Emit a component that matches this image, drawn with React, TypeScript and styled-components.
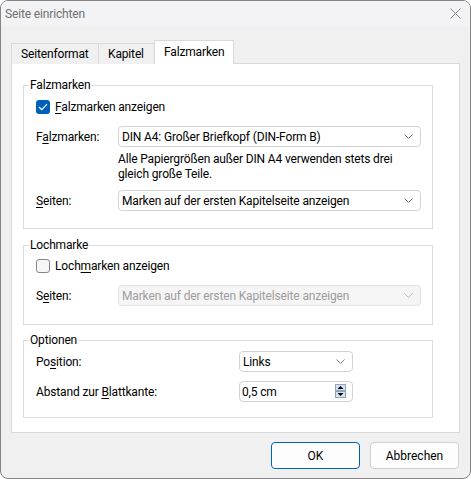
import React from 'react';
import styled, { createGlobalStyle, css } from 'styled-components';

const GlobalStyle = createGlobalStyle`
  html, body {
    margin: 0;
    padding: 0;
    background: #ffffff;
  }
  body {
    font-family: Roboto, 'Noto Sans', sans-serif;
    font-size: 12px;
    letter-spacing: -0.15px;
    color: #1a1a1a;
  }
  * {
    box-sizing: border-box;
  }
`;

const Window = styled.div`
  width: 471px;
  height: 479px;
  border: 1px solid #858585;
  border-radius: 8px;
  overflow: hidden;
  background: #f0f0f0;
  display: flex;
  flex-direction: column;
`;

const TitleBar = styled.div`
  height: 25px;
  flex: none;
  background: #f3f3f6;
  display: flex;
  align-items: center;
  justify-content: space-between;
  padding: 0 9px 0 4px;
  color: #707070;
`;

const Body = styled.div`
  flex: 1;
  display: flex;
  flex-direction: column;
  padding: 14px 10px 0 10px;
`;

const TabStrip = styled.div`
  display: flex;
  align-items: flex-end;
  height: 24px;
  margin-bottom: -1px;
  position: relative;
  z-index: 1;
`;

const Tab = styled.div<{ $active?: boolean; $width: number }>`
  width: ${({ $width }) => $width}px;
  height: 21px;
  border: 1px solid #d9d9d9;
  border-bottom: none;
  background: #f0f0f0;
  display: flex;
  align-items: center;
  padding-left: 9px;
  color: #000;
  & + & {
    margin-left: -1px;
  }
  ${({ $active }) =>
    $active &&
    css`
      height: 24px;
      background: #ffffff;
      padding-bottom: 2px;
    `}
`;

const Panel = styled.div`
  flex: 1;
  background: #ffffff;
  border: 1px solid #d9d9d9;
  padding: 13px 26px 0 11px;
`;

const Group = styled.fieldset<{ $pt: number; $pb: number; $mt?: number }>`
  margin: ${({ $mt }) => $mt ?? 0}px 0 0 0;
  min-width: 0;
  border: 1px solid #dcdcdc;
  padding: ${({ $pt }) => $pt}px 11px ${({ $pb }) => $pb}px 12px;
`;

const Legend = styled.legend`
  padding: 0 1px;
  margin-left: -7px;
  line-height: 16px;
  color: #000;
`;

const CheckRow = styled.label`
  display: flex;
  align-items: center;
  gap: 5px;
  height: 20px;
  color: #000;
`;

const Box = styled.span<{ $checked?: boolean }>`
  width: 14px;
  height: 14px;
  border-radius: 3px;
  display: flex;
  align-items: center;
  justify-content: center;
  ${({ $checked }) =>
    $checked
      ? css`
          background: #005fb8;
        `
      : css`
          background: #f6f6f6;
          border: 1px solid #878787;
        `}
`;

const FieldRow = styled.div<{ $mt: number; $labelWidth: number }>`
  display: grid;
  grid-template-columns: ${({ $labelWidth }) => $labelWidth}px 1fr;
  align-items: center;
  margin-top: ${({ $mt }) => $mt}px;
  color: #000;
`;

const Combo = styled.div<{ $disabled?: boolean; $width?: number }>`
  height: 21px;
  width: ${({ $width }) => ($width ? `${$width}px` : 'auto')};
  border: 1px solid #d3d3d3;
  border-radius: 4px;
  background: #ffffff;
  display: flex;
  align-items: center;
  justify-content: space-between;
  padding: 0 7px 0 3px;
  color: #000;
  white-space: nowrap;
  ${({ $disabled }) =>
    $disabled &&
    css`
      background: #f5f5f5;
      border-color: #e3e3e3;
      color: #9d9d9d;
    `}
`;

const Spin = styled.div`
  height: 21px;
  width: 114px;
  border: 1px solid #d3d3d3;
  border-radius: 4px;
  background: #ffffff;
  display: flex;
  align-items: center;
  justify-content: space-between;
  padding: 0 6px 0 2px;
  color: #000;
`;

const Description = styled.div`
  margin: 5px 0 0 82px;
  line-height: 15px;
  color: #000;
`;

const Footer = styled.div`
  height: 45px;
  flex: none;
  display: flex;
  justify-content: flex-end;
  align-items: flex-start;
  gap: 10px;
  padding: 9px 1px 0 0;
`;

const Button = styled.button<{ $primary?: boolean }>`
  width: 89px;
  height: 27px;
  border: 1px solid ${({ $primary }) => ($primary ? '#005fb8' : '#d0d0d0')};
  border-radius: 4px;
  background: #fdfdfd;
  font: inherit;
  color: #000;
  padding: 0;
`;

const Key = styled.span`
  text-decoration: underline;
  text-underline-offset: 2px;
`;

const Chevron = ({ color = '#7a7a7a' }: { color?: string }) => (
  <svg width="9" height="5" viewBox="0 0 9 5">
    <path d="M0.5 0.5 L4.5 4.5 L8.5 0.5" fill="none" stroke={color} strokeWidth="1" />
  </svg>
);

const Check = () => (
  <svg width="10" height="8" viewBox="0 0 10 8">
    <path d="M1 4 L3.8 6.6 L9 1.2" fill="none" stroke="#ffffff" strokeWidth="1.2" />
  </svg>
);

const Close = () => (
  <svg width="11" height="11" viewBox="0 0 11 11">
    <path d="M0.5 0.5 L10.5 10.5 M10.5 0.5 L0.5 10.5" stroke="#8a8a8a" strokeWidth="1" />
  </svg>
);

const Spinner = () => (
  <svg width="11" height="15" viewBox="0 0 11 15">
    <rect x="0.5" y="0.5" width="10" height="6" fill="#d6e3ef" stroke="#8ea4b8" />
    <rect x="0.5" y="7.5" width="10" height="6" fill="#d6e3ef" stroke="#8ea4b8" />
    <path d="M2.5 5 L5.5 2 L8.5 5 Z" fill="#000" />
    <path d="M2.5 9 L5.5 12 L8.5 9 Z" fill="#000" />
  </svg>
);

export default function App() {
  return (
    <>
      <GlobalStyle />
      <Window>
        <TitleBar>
          <span>Seite einrichten</span>
          <Close />
        </TitleBar>
        <Body>
          <TabStrip>
            <Tab $width={88}>Seitenformat</Tab>
            <Tab $width={57}>Kapitel</Tab>
            <Tab $width={80} $active>
              Falzmarken
            </Tab>
          </TabStrip>
          <Panel>
            <Group $pt={4} $pb={17}>
              <Legend>Falzmarken</Legend>
              <CheckRow>
                <Box $checked>
                  <Check />
                </Box>
                <span>
                  <Key>F</Key>alzmarken anzeigen
                </span>
              </CheckRow>
              <FieldRow $mt={9} $labelWidth={82}>
                <span>
                  F<Key>a</Key>lzmarken:
                </span>
                <Combo>
                  <span>DIN A4: Großer Briefkopf (DIN-Form B)</span>
                  <Chevron />
                </Combo>
              </FieldRow>
              <Description>
                Alle Papiergrößen außer DIN A4 verwenden stets drei
                <br />
                gleich große Teile.
              </Description>
              <FieldRow $mt={8} $labelWidth={82}>
                <span>
                  <Key>S</Key>eiten:
                </span>
                <Combo>
                  <span>Marken auf der ersten Kapitelseite anzeigen</span>
                  <Chevron />
                </Combo>
              </FieldRow>
            </Group>

            <Group $pt={3} $pb={18} $mt={8}>
              <Legend>Lochmarke</Legend>
              <CheckRow>
                <Box />
                <span>
                  Loch<Key>m</Key>arken anzeigen
                </span>
              </CheckRow>
              <FieldRow $mt={9} $labelWidth={82}>
                <span>
                  S<Key>e</Key>iten:
                </span>
                <Combo $disabled>
                  <span>Marken auf der ersten Kapitelseite anzeigen</span>
                  <Chevron color="#b5b5b5" />
                </Combo>
              </FieldRow>
            </Group>

            <Group $pt={3} $pb={15} $mt={7}>
              <Legend>Optionen</Legend>
              <FieldRow $mt={0} $labelWidth={203}>
                <span>
                  Po<Key>s</Key>ition:
                </span>
                <Combo $width={114}>
                  <span>Links</span>
                  <Chevron />
                </Combo>
              </FieldRow>
              <FieldRow $mt={9} $labelWidth={203}>
                <span>
                  Abstand zur <Key>B</Key>lattkante:
                </span>
                <Spin>
                  <span>0,5 cm</span>
                  <Spinner />
                </Spin>
              </FieldRow>
            </Group>
          </Panel>
          <Footer>
            <Button $primary>OK</Button>
            <Button>Abbrechen</Button>
          </Footer>
        </Body>
      </Window>
    </>
  );
}
